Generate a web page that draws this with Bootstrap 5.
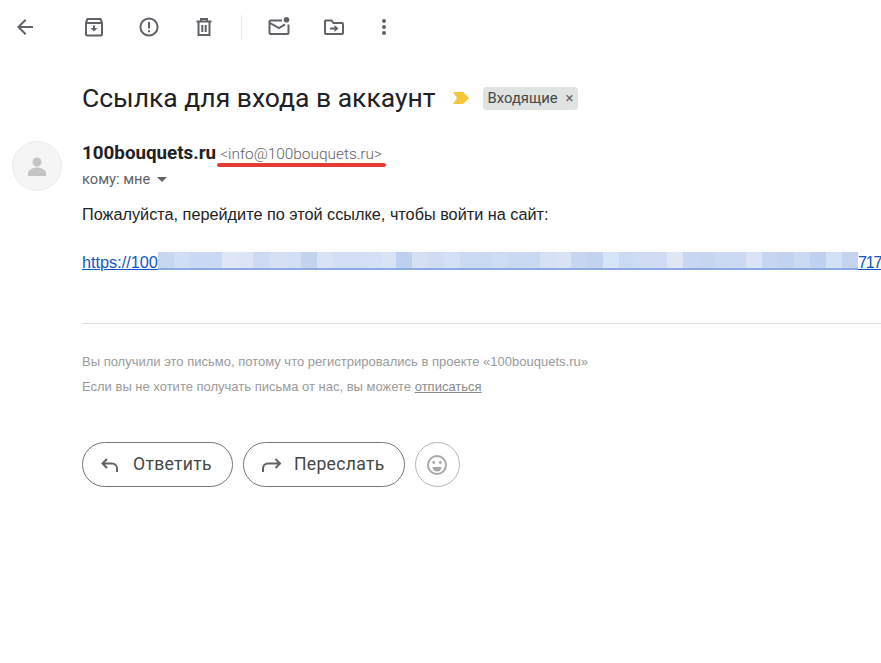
<!DOCTYPE html>
<html lang="ru">
<head>
<meta charset="UTF-8">
<meta name="viewport" content="width=device-width, initial-scale=1.0">
<link href="https://cdn.jsdelivr.net/npm/bootstrap@5.3.0/dist/css/bootstrap.min.css" rel="stylesheet">
<title>Ссылка для входа в аккаунт</title>
<style>
  body { background: #fff; font-family: Roboto, sans-serif; color: #202124; overflow: hidden; width: 881px; height: 663px; }
  .mail-toolbar { height: 54px; padding-left: 13px; }
  .tool-icon { width: 24px; height: 24px; color: #5f6368; flex: none; display: block; }
  .tool-archive { margin-left: 45px; }
  .tool-next { margin-left: 31px; }
  .tool-dots { margin-left: 26px; }
  .tool-sep { width: 1px; height: 25px; background: #ebebeb; margin: 0 25px; }
  .mail-main { padding-left: 82px; }
  .mail-subject-row { height: 36px; margin-top: 26px; }
  .mail-subject { font-size: 26.5px; line-height: 36px; font-weight: 400; margin: 0; color: #202124; }
  .tag-marker { margin-left: 17px; margin-right: 14px; display: block; }
  .tag-inbox { background: #dfe3e1; border-radius: 4px; height: 23px; padding: 0 5px; font-size: 14.8px; line-height: 23px; color: #444746; white-space: nowrap; }
  .tag-inbox span { margin-left: 8px; color: #5f6368; }
  .mail-avatar { position: absolute; left: 12px; top: 141px; width: 50px; height: 50px; border-radius: 50%; background: #f5f5f5; border: 1px solid #ececec; }
  .sender-row { margin-top: 26px; height: 22px; line-height: 22px; position: relative; }
  .sender-name { font-size: 18.8px; font-weight: 700; color: #202124; }
  .sender-mail { font-size: 15.4px; font-weight: 300; color: #5f6368; margin-left: 4px; }
  .red-line { position: absolute; left: 135px; top: 21px; width: 169px; height: 4px; border-radius: 2px; background: #e53935; }
  .to-row { font-size: 14.7px; color: #5f6368; height: 20px; line-height: 20px; margin-top: 5px; }
  .caret-down { width: 0; height: 0; border: 5px solid transparent; border-top-color: #5f6368; border-bottom: 0; margin-left: 7px; }
  .body-text { font-family: "Liberation Sans", Arial, sans-serif; font-size: 16.25px; line-height: 20px; color: #222; }
  .intro-line { margin-top: 15px; }
  .link-line { margin-top: 28px; white-space: nowrap; height: 20px; }
  .link-line a { color: #1155cc; flex: none; }
  .link-line .link-tail { letter-spacing: -1.2px; }
  .blur-strip { display: flex; flex: none; height: 16px; width: 700px; box-shadow: 0 2px 0 #8aaae0; }
  .blur-strip i { flex: 1; display: block; }
  .mail-rule { border: 0; border-top: 1px solid #dedede; opacity: 1; margin: 51px 0 0; }
  .foot-note { font-family: "Liberation Sans", Arial, sans-serif; font-size: 13px; line-height: 25px; color: #9a9a9a; }
  .foot-note a { color: #8a8a8a; }
  .foot-first { margin-top: 25px; }
  .reply-btn { height: 45px; border-radius: 23px; border: 1px solid #747775; background: #fff; font-size: 17.6px; color: #444746; padding: 0 20px 0 16px; gap: 10px; font-family: Roboto, sans-serif; letter-spacing: .3px; }
  .reply-btn.btn-forward { padding-right: 19px; }
  .smile-btn { width: 45px; height: 45px; border-radius: 50%; border: 1px solid #b5b5b5; background: #fff; padding: 0; }
  .reply-row { margin-top: 43px; gap: 10px; }
</style>
</head>
<body>
<div class="mail-toolbar d-flex align-items-center">
  <svg class="tool-icon" viewBox="0 0 24 24" fill="currentColor"><path d="M20 11H7.830l5.590-5.590L12 4l-8 8 8 8 1.410-1.410L7.830 13H20z"/></svg>
  <svg class="tool-icon tool-archive" viewBox="0 0 24 24" fill="none" stroke="currentColor" stroke-width="2"><path d="M4 7.500V19a1.500 1.500 0 0 0 1.500 1.500h13A1.500 1.500 0 0 0 20 19V7.500M4 7.500 5.500 4h13L20 7.500M3.500 8h17"/><path d="M12 10.500v4"/><path d="m8.500 13 3.500 3.500 3.500-3.500z" fill="currentColor" stroke="none"/></svg>
  <svg class="tool-icon tool-next" viewBox="0 0 24 24" fill="none" stroke="currentColor" stroke-width="2"><circle cx="12" cy="12" r="8.600"/><path d="M12 7v6.500M12 15.300v2"/></svg>
  <svg class="tool-icon tool-next" viewBox="0 0 24 24" fill="none" stroke="currentColor" stroke-width="2"><path d="M6.500 7.500V20h11V7.500M4.500 6.500h15M9 5.500V4h6v1.500M10.300 10v7M13.700 10v7"/></svg>
  <div class="tool-sep"></div>
  <svg class="tool-icon" viewBox="0 0 24 24" fill="none" stroke="currentColor" stroke-width="2"><path d="M15 5.500H3.500a1 1 0 0 0-1 1V18a1 1 0 0 0 1 1h17a1 1 0 0 0 1-1V9.500"/><path d="m3 8 9 5 6-3.700"/><circle cx="19.500" cy="4.800" r="2.800" fill="currentColor" stroke="none"/></svg>
  <svg class="tool-icon tool-next" viewBox="0 0 24 24" fill="none" stroke="currentColor" stroke-width="2"><path d="M3 7V18a1 1 0 0 0 1 1h16a1 1 0 0 0 1-1V9a1 1 0 0 0-1-1h-8.500l-2-2.500H4A1 1 0 0 0 3 7z"/><path d="M8 13.500h5"/><path d="m12.500 10 4 3.500-4 3.500z" fill="currentColor" stroke="none"/></svg>
  <svg class="tool-icon tool-dots" viewBox="0 0 24 24" fill="currentColor"><circle cx="12" cy="6" r="2"/><circle cx="12" cy="12" r="2"/><circle cx="12" cy="18" r="2"/></svg>
</div>

<div class="mail-avatar d-flex align-items-center justify-content-center">
  <svg width="26" height="26" viewBox="0 0 26 26" fill="#c4c4c4"><circle cx="13" cy="9" r="4.500"/><path d="M4 23v-3c0-3 5-5.500 9-5.500s9 2.500 9 5.500v3z"/></svg>
</div>

<div class="mail-main">
  <div class="mail-subject-row d-flex align-items-center">
    <h1 class="mail-subject">Ссылка для входа в аккаунт</h1>
    <svg class="tag-marker" width="16" height="12" viewBox="0 0 16 12"><path d="M0 0h10l6 6-6 6H0l4-6z" fill="#f7c638"/></svg>
    <div class="tag-inbox">Входящие<span>×</span></div>
  </div>
  <div class="sender-row">
    <span class="sender-name">100bouquets.ru</span><span class="sender-mail">&lt;info@100bouquets.ru&gt;</span>
    <div class="red-line"></div>
  </div>
  <div class="to-row d-flex align-items-center">кому: мне<span class="caret-down"></span></div>
  <div class="body-text intro-line">Пожалуйста, перейдите по этой ссылке, чтобы войти на сайт:</div>
  <div class="body-text link-line d-flex">
    <a href="#">https://100</a>
    <div class="blur-strip" id="blur"></div>
    <a href="#" class="link-tail">717</a>
  </div>
  <hr class="mail-rule">
  <div class="foot-note foot-first">Вы получили это письмо, потому что регистрировались в проекте «100bouquets.ru»</div>
  <div class="foot-note">Если вы не хотите получать письма от нас, вы можете <a href="#">отписаться</a></div>
  <div class="reply-row d-flex">
    <button class="reply-btn d-flex align-items-center">
      <svg width="24" height="24" viewBox="0 0 24 24" fill="none" stroke="#5f6368" stroke-width="2"><path d="M8 6 3.500 10.500 8 15M4 10.500h9a5 5 0 0 1 5 5V19"/></svg>Ответить
    </button>
    <button class="reply-btn btn-forward d-flex align-items-center">
      <svg width="24" height="24" viewBox="0 0 24 24" fill="none" stroke="#5f6368" stroke-width="2"><path d="m15.500 6 4.500 4.500-4.500 4.500M19.500 10.500H8a5 5 0 0 0-5 5V19"/></svg>Переслать
    </button>
    <button class="smile-btn d-flex align-items-center justify-content-center">
      <svg width="24" height="24" viewBox="0 0 24 24" fill="none" stroke="#a8a8a8" stroke-width="2"><circle cx="12" cy="12" r="9"/><circle cx="8.700" cy="9.500" r="1.400" fill="#a8a8a8" stroke="none"/><circle cx="15.300" cy="9.500" r="1.400" fill="#a8a8a8" stroke="none"/><path d="M7.500 14h9a4.500 4.500 0 0 1-9 0z" fill="#a8a8a8" stroke="none"/></svg>
    </button>
  </div>
</div>
<script>
  // pixelated part of the link
  var cols = ["#c7d7f2","#d0ddf4","#c9d9f3","#c9d9f3","#dfe7f7","#dbe5f6","#ccdaf3","#d5e0f5","#d2dff4","#c2d3f0","#d8e3f6","#d2dff4","#d2dff4","#d4e0f5","#d8e3f6","#bdd0ef","#d5e0f5","#cfdcf4","#d4e0f5","#cbdaf3","#cbdaf3","#cfdcf3","#cad9f2","#cad9f2","#d6e1f5","#d9e3f6","#c6d6f1","#c2d3f0","#d8e4f8","#ccdbf4","#cfdcf4","#cfdcf4","#dfe7f7","#c9d8f2","#c6d6f1","#cbd9f2","#cbd9f2","#dae4f6","#c6d6f1","#c2d3f0","#cbd9f2","#bfd1ef","#d4e0f5","#c4d4f0"];
  var box = document.getElementById("blur");
  cols.forEach(function (c) {
    var el = document.createElement("i");
    el.style.background = c;
    box.appendChild(el);
  });
</script>
<script src="https://cdn.jsdelivr.net/npm/bootstrap@5.3.0/dist/js/bootstrap.bundle.min.js"></script>
</body>
</html>
